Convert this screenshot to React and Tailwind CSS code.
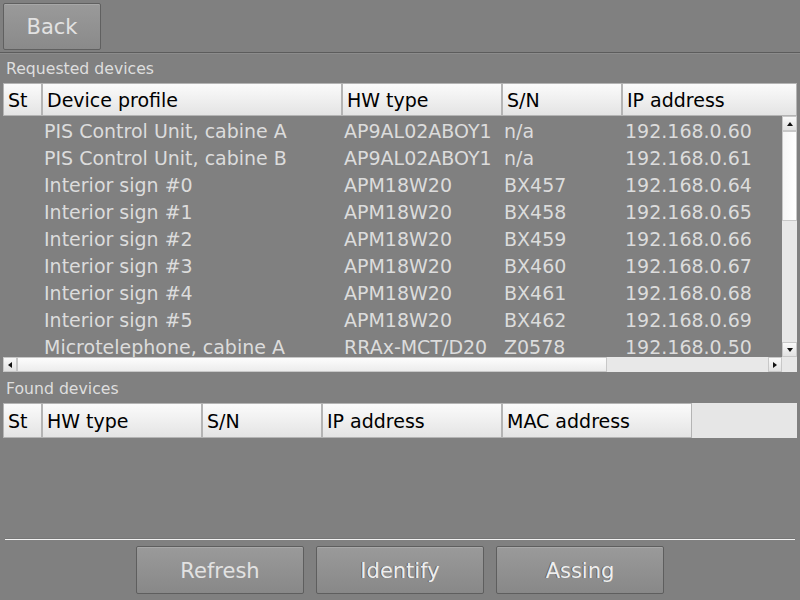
import React from "react";

const requested = [
  ["PIS Control Unit, cabine A", "AP9AL02ABOY1", "n/a", "192.168.0.60"],
  ["PIS Control Unit, cabine B", "AP9AL02ABOY1", "n/a", "192.168.0.61"],
  ["Interior sign #0", "APM18W20", "BX457", "192.168.0.64"],
  ["Interior sign #1", "APM18W20", "BX458", "192.168.0.65"],
  ["Interior sign #2", "APM18W20", "BX459", "192.168.0.66"],
  ["Interior sign #3", "APM18W20", "BX460", "192.168.0.67"],
  ["Interior sign #4", "APM18W20", "BX461", "192.168.0.68"],
  ["Interior sign #5", "APM18W20", "BX462", "192.168.0.69"],
  ["Microtelephone, cabine A", "RRAx-MCT/D20", "Z0578", "192.168.0.50"],
];

function HeadCell({ w, children }) {
  return (
    <div
      className={`${w} flex h-full shrink-0 items-center border border-[#b4b4b4] bg-gradient-to-b from-[#fbfbfb] to-[#e4e4e4] pl-[4px] pt-[1px] text-[19px] text-black`}
    >
      {children}
    </div>
  );
}

function BigButton({ label, disabled = false }) {
  return (
    <button
      type="button"
      className={`flex h-[48px] w-[168px] items-center justify-center rounded-[2px] border border-[#5e5e5e] bg-gradient-to-b from-[#9a9a9a] to-[#888888] pt-[3px] text-[21px] shadow-[inset_0_1px_0_#a8a8a8] ${
        disabled ? "text-[#eeeeee] [text-shadow:-1px_0_0_#5e5e5e]" : "text-[#e2e2e2]"
      }`}
    >
      {label}
    </button>
  );
}

function Arrow({ dir }) {
  const pts = {
    up: "1,6 4,2 7,6",
    down: "1,2 4,6 7,2",
    left: "6,1 2,4 6,7",
    right: "2,1 6,4 2,7",
  }[dir];
  return (
    <svg width="8" height="8" viewBox="0 0 8 8">
      <polygon points={pts} fill="#111" />
    </svg>
  );
}

export default function App() {
  return (
    <div
      className="flex h-[600px] w-[800px] flex-col overflow-hidden bg-[#808080]"
      style={{ fontFamily: '"DejaVu Sans", sans-serif' }}
    >
      <div className="flex h-[52px] shrink-0 items-start pl-[3px] pt-[3px]">
        <button
          type="button"
          className="flex h-[47px] w-[98px] items-center justify-center rounded-[2px] border border-[#606060] bg-gradient-to-b from-[#9a9a9a] to-[#8a8a8a] pt-[3px] text-[21px] text-[#e2e2e2] shadow-[inset_0_1px_0_#a8a8a8]"
        >
          Back
        </button>
      </div>
      <div className="h-[2px] shrink-0 border-t border-[#5c5c5c] border-b border-b-[#8c8c8c]" />

      <div className="flex h-[29px] shrink-0 items-center pl-[6px] pt-[1px] text-[15.7px] text-[#dedede]">
        Requested devices
      </div>

      <div className="mx-[3px] flex h-[290px] shrink-0 flex-col">
        <div className="flex h-[33px] shrink-0">
          <HeadCell w="w-[39px]">St</HeadCell>
          <HeadCell w="w-[300px]">Device profile</HeadCell>
          <HeadCell w="w-[160px]">HW type</HeadCell>
          <HeadCell w="w-[120px]">S/N</HeadCell>
          <HeadCell w="w-[175px]">IP address</HeadCell>
        </div>
        <div className="flex h-[241px] shrink-0">
          <div className="flex-1 overflow-hidden pt-[2px] text-[19px] text-[#dcdcdc]">
            {requested.map((r) => (
              <div key={r[0]} className="flex h-[27px] items-center">
                <div className="w-[39px] shrink-0" />
                <div className="w-[300px] shrink-0 pl-[2px]">{r[0]}</div>
                <div className="w-[160px] shrink-0 pl-[2px]">{r[1]}</div>
                <div className="w-[120px] shrink-0 pl-[2px]">{r[2]}</div>
                <div className="shrink-0 pl-[3px]">{r[3]}</div>
              </div>
            ))}
          </div>
          <div className="flex w-[15px] shrink-0 flex-col bg-[#e8e8e8]">
            <div className="flex h-[15px] items-center justify-center border border-[#c8c8c8] bg-gradient-to-b from-[#fafafa] to-[#e2e2e2]">
              <Arrow dir="up" />
            </div>
            <div className="h-[90px] border border-[#c8c8c8] bg-gradient-to-r from-[#f6f6f6] to-[#ffffff]" />
            <div className="flex-1" />
            <div className="flex h-[15px] items-center justify-center border border-[#c8c8c8] bg-gradient-to-b from-[#fafafa] to-[#e2e2e2]">
              <Arrow dir="down" />
            </div>
          </div>
        </div>
        <div className="flex h-[15px] shrink-0">
          <div className="flex flex-1 bg-[#e8e8e8]">
            <div className="flex w-[14px] items-center justify-center border border-[#c8c8c8] bg-gradient-to-b from-[#fafafa] to-[#e2e2e2]">
              <Arrow dir="left" />
            </div>
            <div className="w-[590px] border border-[#c8c8c8] bg-gradient-to-b from-[#fdfdfd] to-[#ececec]" />
            <div className="flex-1" />
            <div className="flex w-[14px] items-center justify-center border border-[#c8c8c8] bg-gradient-to-b from-[#fafafa] to-[#e2e2e2]">
              <Arrow dir="right" />
            </div>
          </div>
          <div className="w-[15px] bg-[#e8e8e8]" />
        </div>
      </div>

      <div className="flex h-[30px] shrink-0 items-center pl-[6px] pt-[2px] text-[15.7px] text-[#dedede]">
        Found devices
      </div>

      <div className="mx-[3px] flex h-[35px] shrink-0 bg-[#e6e6e6]">
        <HeadCell w="w-[39px]">St</HeadCell>
        <HeadCell w="w-[160px]">HW type</HeadCell>
        <HeadCell w="w-[120px]">S/N</HeadCell>
        <HeadCell w="w-[180px]">IP address</HeadCell>
        <HeadCell w="w-[190px]">MAC address</HeadCell>
      </div>

      <div className="flex-1" />

      <div className="mx-[5px] h-[2px] shrink-0 border-t border-[#767676] border-b border-b-[#f2f2f2]" />

      <div className="flex h-[60px] shrink-0 items-start justify-start gap-[12px] pl-[136px] pt-[6px]">
        <BigButton label="Refresh" />
        <BigButton label="Identify" disabled />
        <BigButton label="Assing" disabled />
      </div>
    </div>
  );
}
